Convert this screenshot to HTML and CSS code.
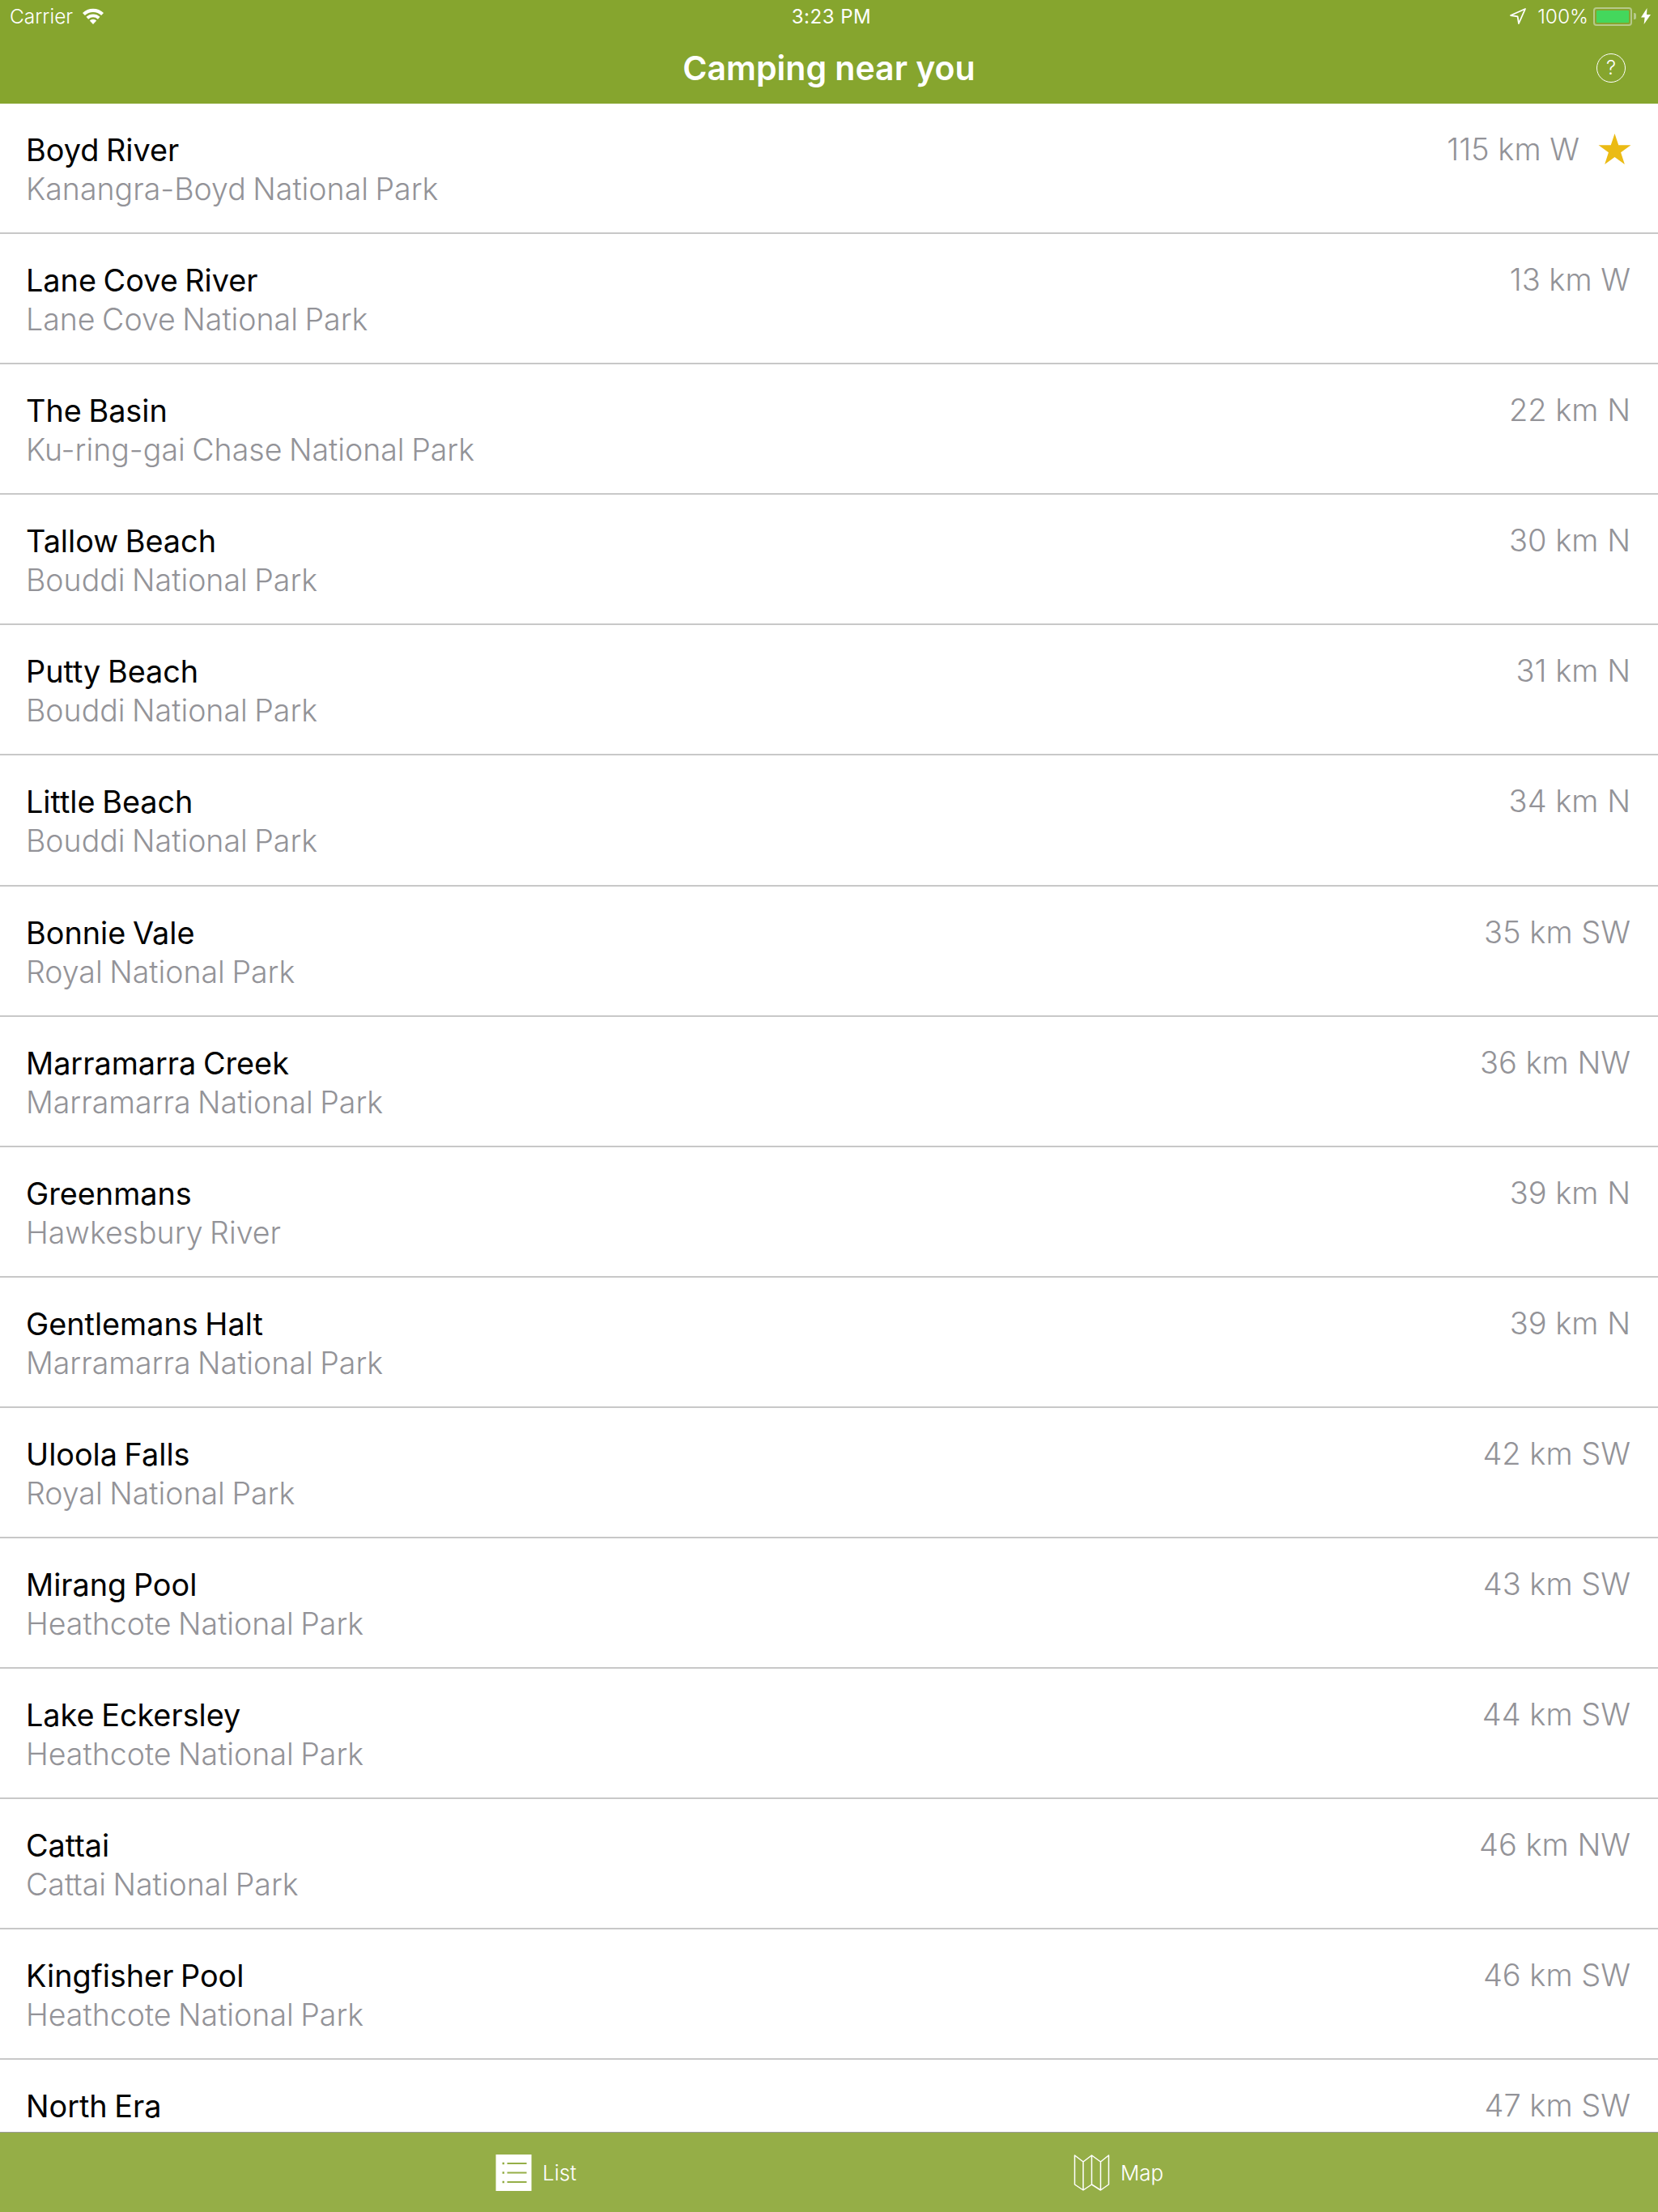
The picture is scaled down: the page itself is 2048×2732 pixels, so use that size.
FILE: index.html
```html
<!DOCTYPE html>
<html lang="en">
<head>
  <meta charset="UTF-8">
  <meta name="viewport" content="width=device-width, initial-scale=1.0">
  <title>Camping near you</title>
  <link rel="stylesheet" href="styles.css">
</head>
<body>
  <div class="app">
    <header class="header">
      <div class="status-bar">
        <div class="status-left">
          <span>Carrier</span>
          <svg class="wifi" viewBox="0 0 22 16"><path d="M11 16 7.600 12.300a5 5 0 0 1 6.800 0z"/><path d="M6.300 10.900 4.200 8.600a10 10 0 0 1 13.600 0l-2.100 2.300a7 7 0 0 0-9.400 0z"/><path d="M2.900 7.200.6 4.800a15.200 15.200 0 0 1 20.800 0l-2.300 2.400a11.800 11.800 0 0 0-16.200 0z"/></svg>
        </div>
        <div class="status-time">3:23 PM</div>
        <div class="status-right">
          <svg class="arrow" viewBox="0 0 20 20"><path d="M19 1 1 9l8.600 1.400L11 19z" fill="none" stroke="#fff" stroke-width="1.800" stroke-linejoin="round"/></svg>
          <span>100%</span>
          <div class="battery"><div class="battery-fill"></div></div>
          <div class="battery-tip"></div>
          <svg class="bolt" viewBox="0 0 12 20"><path d="M7.500 0 0 11.500h4.600L3.600 20 12 8H7z"/></svg>
        </div>
      </div>
      <div class="nav-bar">
        <h1 class="nav-title">Camping near you</h1>
        <div class="help">?</div>
      </div>
    </header>

    <main class="list">
      <div class="row">
        <div class="row-text">
          <div class="name">Boyd River</div>
          <div class="park">Kanangra-Boyd National Park</div>
        </div>
        <div class="distance">115 km W</div>
        <svg class="star" viewBox="0 0 42 40"><path d="M21 0l5 15h16L29 24.500l5 15.500-13-9.500L8 40l5-15.500L0 15h16z"/></svg>
      </div>
      <div class="row">
        <div class="row-text">
          <div class="name">Lane Cove River</div>
          <div class="park">Lane Cove National Park</div>
        </div>
        <div class="distance">13 km W</div>
      </div>
      <div class="row">
        <div class="row-text">
          <div class="name">The Basin</div>
          <div class="park">Ku-ring-gai Chase National Park</div>
        </div>
        <div class="distance">22 km N</div>
      </div>
      <div class="row">
        <div class="row-text">
          <div class="name">Tallow Beach</div>
          <div class="park">Bouddi National Park</div>
        </div>
        <div class="distance">30 km N</div>
      </div>
      <div class="row">
        <div class="row-text">
          <div class="name">Putty Beach</div>
          <div class="park">Bouddi National Park</div>
        </div>
        <div class="distance">31 km N</div>
      </div>
      <div class="row">
        <div class="row-text">
          <div class="name">Little Beach</div>
          <div class="park">Bouddi National Park</div>
        </div>
        <div class="distance">34 km N</div>
      </div>
      <div class="row">
        <div class="row-text">
          <div class="name">Bonnie Vale</div>
          <div class="park">Royal National Park</div>
        </div>
        <div class="distance">35 km SW</div>
      </div>
      <div class="row">
        <div class="row-text">
          <div class="name">Marramarra Creek</div>
          <div class="park">Marramarra National Park</div>
        </div>
        <div class="distance">36 km NW</div>
      </div>
      <div class="row">
        <div class="row-text">
          <div class="name">Greenmans</div>
          <div class="park">Hawkesbury River</div>
        </div>
        <div class="distance">39 km N</div>
      </div>
      <div class="row">
        <div class="row-text">
          <div class="name">Gentlemans Halt</div>
          <div class="park">Marramarra National Park</div>
        </div>
        <div class="distance">39 km N</div>
      </div>
      <div class="row">
        <div class="row-text">
          <div class="name">Uloola Falls</div>
          <div class="park">Royal National Park</div>
        </div>
        <div class="distance">42 km SW</div>
      </div>
      <div class="row">
        <div class="row-text">
          <div class="name">Mirang Pool</div>
          <div class="park">Heathcote National Park</div>
        </div>
        <div class="distance">43 km SW</div>
      </div>
      <div class="row">
        <div class="row-text">
          <div class="name">Lake Eckersley</div>
          <div class="park">Heathcote National Park</div>
        </div>
        <div class="distance">44 km SW</div>
      </div>
      <div class="row">
        <div class="row-text">
          <div class="name">Cattai</div>
          <div class="park">Cattai National Park</div>
        </div>
        <div class="distance">46 km NW</div>
      </div>
      <div class="row">
        <div class="row-text">
          <div class="name">Kingfisher Pool</div>
          <div class="park">Heathcote National Park</div>
        </div>
        <div class="distance">46 km SW</div>
      </div>
      <div class="row">
        <div class="row-text">
          <div class="name">North Era</div>
        </div>
        <div class="distance">47 km SW</div>
      </div>
    </main>

    <footer class="tab-bar">
      <div class="tab tab-list">
        <svg class="tab-icon" viewBox="0 0 44 45"><rect width="44" height="45" fill="#fff"/><path d="M14 11h24M14 22.500h24M14 34h24" stroke="#95ae47" stroke-width="2"/><path d="M8 11h2.500M8 22.500h2.500M8 34h2.500" stroke="#95ae47" stroke-width="2.500"/></svg>
        <span>List</span>
      </div>
      <div class="tab tab-map">
        <svg class="tab-icon" viewBox="0 0 44 45"><path d="M1 1l10.500 8L22 1l11 8 10-8v36l-10 7-11-7-10.500 7L1 37zM11.500 9v35M22 1v36M33 9v35" fill="none" stroke="#fff" stroke-width="1.500" stroke-linejoin="round"/></svg>
        <span>Map</span>
      </div>
    </footer>
  </div>
</body>
</html>
```

FILE: styles.css
```css
html, body {
  margin: 0;
  height: 100%;
  background: #fff;
}
body {
  font-family: Inter, "Liberation Sans", sans-serif;
  overflow: hidden;
}
.app {
  display: flex;
  flex-direction: column;
  height: 2732px;
}
.header {
  flex: none;
  height: 128px;
  background: #86a52e;
  color: #fff;
}
.status-bar {
  display: flex;
  align-items: center;
  justify-content: space-between;
  height: 40px;
  padding: 0 9px 0 12px;
  font-size: 24.5px;
  font-weight: 300;
}
.status-left, .status-right {
  display: flex;
  align-items: center;
  width: 400px;
}
.status-left {
  width: 403px;
}
.status-right {
  justify-content: flex-end;
}
.status-time {
  font-weight: 400;
  font-size: 24px;
  letter-spacing: 0.5px;
}
.wifi {
  width: 28px;
  height: 20px;
  margin-left: 11px;
  fill: #fff;
}
.arrow {
  width: 20px;
  height: 20px;
  margin-right: 14px;
}
.battery {
  box-sizing: border-box;
  width: 48px;
  height: 23px;
  margin-left: 6px;
  padding: 2px;
  border: 2px solid #b6c98a;
  border-radius: 4px;
}
.battery-fill {
  height: 100%;
  background: #44d75c;
  border-radius: 1px;
}
.battery-tip {
  width: 3px;
  height: 8px;
  margin-left: 2px;
  background: #b6c98a;
  border-radius: 0 2px 2px 0;
}
.bolt {
  width: 12px;
  height: 20px;
  margin-left: 6px;
  fill: #fff;
}
.nav-bar {
  position: relative;
  display: flex;
  align-items: center;
  justify-content: center;
  height: 88px;
}
.nav-title {
  margin: 0;
  font-size: 41px;
  font-weight: 600;
}
.help {
  position: absolute;
  right: 40px;
  top: 26px;
  box-sizing: border-box;
  width: 36px;
  height: 36px;
  border: 1.5px solid #fff;
  border-radius: 50%;
  font-size: 24px;
  font-weight: 300;
  line-height: 33px;
  text-align: center;
}
.list {
  flex: 1;
  min-height: 0;
  overflow: hidden;
}
.row {
  box-sizing: border-box;
  display: flex;
  align-items: flex-start;
  height: 161.1px;
  padding: 32px 34px 0 32px;
  border-bottom: 2px solid #c8c8c8;
}
.row-text {
  flex: 1;
}
.name {
  margin-top: 1px;
  font-size: 37.8px;
  font-weight: 440;
  line-height: 48px;
  word-spacing: -2px;
  color: #000;
}
.park {
  margin-top: 1px;
  font-size: 37.5px;
  font-weight: 300;
  line-height: 48px;
  word-spacing: -2px;
  color: #939398;
}
.distance {
  font-size: 38px;
  font-weight: 300;
  line-height: 48px;
  color: #939398;
}
.star {
  width: 41px;
  height: 38px;
  margin: 5px -1px 0 23px;
  fill: #ebbb14;
}
.tab-bar {
  flex: none;
  display: flex;
  height: 99px;
  background: #95ae47;
  border-top: 1px solid #9a9a9a;
  box-sizing: border-box;
  color: #fff;
  font-size: 26px;
  font-weight: 300;
}
.tab {
  display: flex;
  align-items: center;
  gap: 13px;
}
.tab-list {
  margin-left: 612px;
}
.tab-map {
  margin-left: 614px;
}
.tab-icon {
  width: 45px;
  height: 45px;
}
```
